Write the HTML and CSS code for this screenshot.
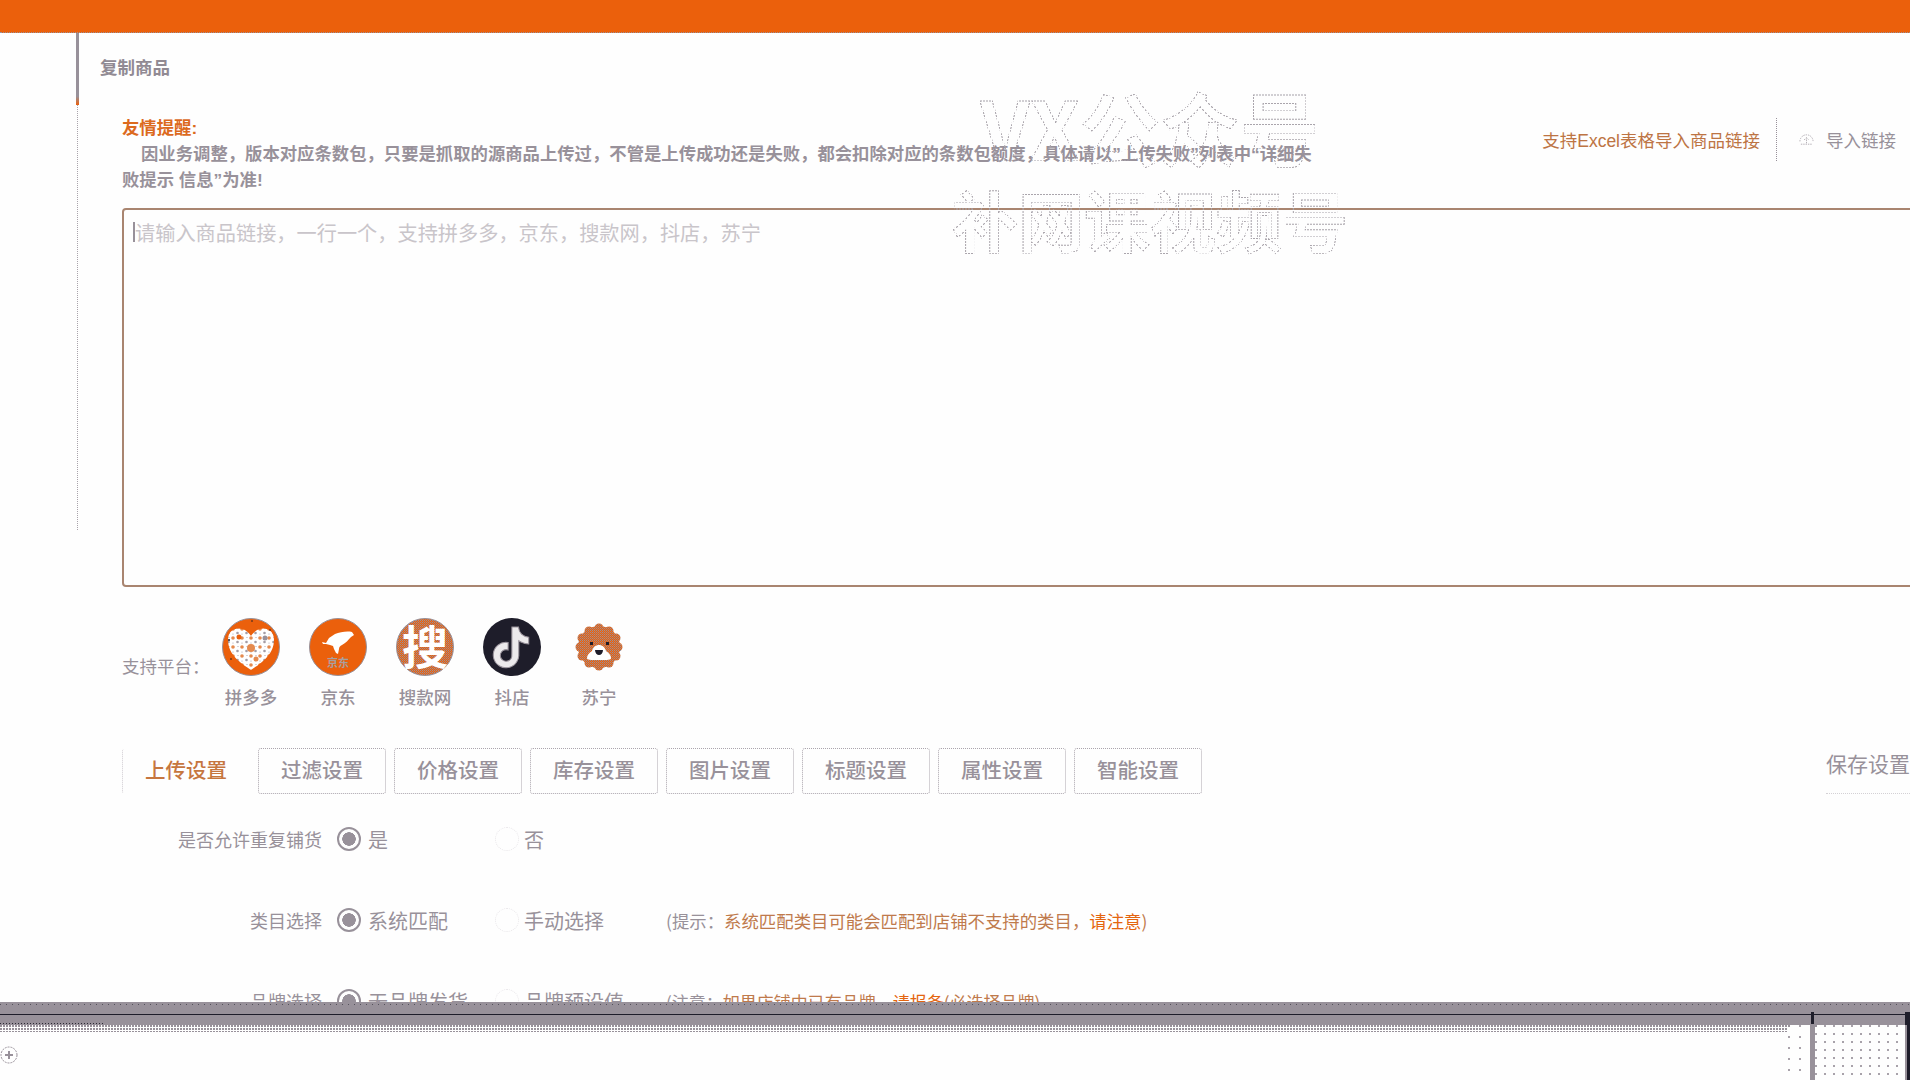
FILE: index.html
```html
<!DOCTYPE html>
<html lang="zh-CN">
<head>
<meta charset="utf-8">
<title>复制商品</title>
<link rel="stylesheet" href="styles.css">
</head>
<body>
<svg class="defs" width="0" height="0">
  <defs>
    <pattern id="speck" width="9" height="9" patternUnits="userSpaceOnUse">
      <rect width="9" height="9" fill="#fff"/>
      <circle cx="2" cy="2" r="1.800" fill="#e58a4e"/>
      <circle cx="6.500" cy="6" r="1.300" fill="#a39ca5"/>
      <circle cx="7" cy="1.500" r=".5" fill="#98919a"/>
      <circle cx="2" cy="7" r=".5" fill="#98919a"/>
    </pattern>
    <pattern id="dither" width="2" height="2" patternUnits="userSpaceOnUse">
      <rect width="2" height="2" fill="#eb600c"/>
      <rect width="1" height="1" fill="#98919a"/>
      <rect x="1" y="1" width="1" height="1" fill="#98919a" opacity=".6"/>
    </pattern>
  </defs>
</svg>
<header class="topbar"></header>
<div class="shell">
  <div class="rail"><div class="rail-thick"></div><div class="rail-dots"></div></div>
  <main class="content">
    <h1 class="page-title">复制商品</h1>
    <section class="notice-row">
      <div class="notice">
        <div class="notice-head">友情提醒:</div>
        <p class="notice-body">因业务调整，版本对应条数包，只要是抓取的源商品上传过，不管是上传成功还是失败，都会扣除对应的条数包额度，具体请以”上传失败”列表中“详细失败提示 信息”为准!</p>
      </div>
      <div class="tools">
        <span class="tool-link">支持Excel表格导入商品链接</span>
        <span class="tool-divider"></span>
        <svg class="tool-icon" viewBox="0 0 16 16"><path d="M1 10a7 7 0 1 1 14 0"/><path d="M2 13h12"/><path d="M8 12V6M5.500 8.500 8 6l2.500 2.500"/></svg>
        <span class="tool-btn">导入链接</span>
      </div>
    </section>
    <div class="input-wrap">
      <textarea class="links" placeholder="请输入商品链接，一行一个，支持拼多多，京东，搜款网，抖店，苏宁"></textarea>
      <span class="caret"></span>
    </div>
    <section class="platforms">
      <div class="platforms-label">支持平台：</div>
      <div class="platform">
        <svg class="logo" viewBox="0 0 58 58">
          <circle cx="29" cy="29" r="28.500" fill="#eb600c" stroke="#98919a"/>
          <path d="M29 52C20 46 6 37 6 22 6 12 14 9 20 11c4 1 7 4 9 7 2-3 5-6 9-7 6-2 14 1 14 11 0 15-14 24-23 30z" fill="url(#speck)"/>
          <circle cx="29" cy="30" r="4" fill="#e58a4e"/><circle cx="17" cy="19" r="2.500" fill="#eb600c"/><circle cx="43" cy="20" r="2.500" fill="#98919a"/><circle cx="34" cy="41" r="2.500" fill="#e58a4e"/>
          <circle cx="7" cy="22" r="1" fill="#1e1d2a"/><circle cx="9" cy="41" r=".8" fill="#1e1d2a"/><circle cx="30" cy="3" r=".8" fill="#1e1d2a"/><circle cx="48" cy="12" r=".8" fill="#1e1d2a"/>
        </svg>
        <span class="platform-name">拼多多</span>
      </div>
      <div class="platform">
        <svg class="logo" viewBox="0 0 58 58">
          <circle cx="29" cy="29" r="28.500" fill="#eb600c" stroke="#98919a"/>
          <path d="M13 24l4 1 3-5 6-4c5-2 12-3 17-2l2 3-3 2c-3 3-5 6-9 8-2 1-3 2-3 4l-1 5-2-1-2-4-1-3-3-1-4-1-3 0z" fill="#fff"/>
          <text class="logo-small" x="29" y="49">京东</text>
        </svg>
        <span class="platform-name">京东</span>
      </div>
      <div class="platform">
        <svg class="logo" viewBox="0 0 58 58">
          <circle cx="29" cy="29" r="28.500" fill="url(#dither)" stroke="#98919a"/>
          <text class="logo-big" x="29" y="46">搜</text>
        </svg>
        <span class="platform-name">搜款网</span>
      </div>
      <div class="platform">
        <svg class="logo" viewBox="0 0 58 58">
          <circle cx="29" cy="29" r="29" fill="#1e1d2a"/>
          <path class="note" transform="translate(7.600 9) scale(1.700)" d="M12.530.02C13.840 0 15.140.01 16.440 0c.08 1.530.63 3.090 1.750 4.170 1.120 1.110 2.700 1.620 4.240 1.790v4.030c-1.440-.05-2.890-.35-4.200-.97-.57-.26-1.100-.59-1.620-.93-.01 2.920.01 5.840-.02 8.750-.08 1.400-.54 2.790-1.350 3.940-1.310 1.920-3.580 3.170-5.910 3.210-1.430.08-2.860-.31-4.080-1.030-2.020-1.190-3.440-3.370-3.650-5.710-.02-.5-.03-1-.01-1.490.18-1.900 1.120-3.720 2.580-4.960 1.660-1.440 3.980-2.130 6.150-1.720.02 1.480-.04 2.960-.04 4.440-.99-.32-2.150-.23-3.020.37-.63.41-1.110 1.040-1.360 1.750-.21.51-.15 1.070-.14 1.610.24 1.640 1.820 3.020 3.500 2.870 1.120-.01 2.190-.66 2.770-1.610.19-.33.4-.67.41-1.060.1-1.790.06-3.570.07-5.360.01-4.030-.01-8.050.02-12.070z"/>
        </svg>
        <span class="platform-name">抖店</span>
      </div>
      <div class="platform">
        <svg class="logo" viewBox="0 0 58 58">
          <g fill="url(#dither)">
            <circle cx="29" cy="29" r="21"/>
            <circle cx="29" cy="10" r="4.500"/><circle cx="39" cy="13" r="4.500"/><circle cx="46" cy="20" r="4.500"/><circle cx="48" cy="29" r="4.500"/><circle cx="46" cy="38" r="4.500"/><circle cx="39" cy="45" r="4.500"/><circle cx="29" cy="48" r="4.500"/><circle cx="19" cy="45" r="4.500"/><circle cx="12" cy="38" r="4.500"/><circle cx="10" cy="29" r="4.500"/><circle cx="12" cy="20" r="4.500"/><circle cx="19" cy="13" r="4.500"/>
          </g>
          <path d="M17 40c0-3 2-5 5-7 1-4 4-6 7-6s6 2 7 6c3 2 5 4 5 7 0 2-3 2-12 2s-12 0-12-2z" fill="#fff"/>
          <path d="M25 32h8c0 3-2 5-4 5s-4-2-4-5z" fill="#1e1d2a"/>
          <rect x="20" y="24" width="3" height="3" fill="#1e1d2a"/><rect x="36" y="24" width="3" height="3" fill="#1e1d2a"/>
        </svg>
        <span class="platform-name">苏宁</span>
      </div>
    </section>
    <nav class="tabs">
      <span class="tab tab-active">上传设置</span>
      <span class="tab">过滤设置</span>
      <span class="tab">价格设置</span>
      <span class="tab">库存设置</span>
      <span class="tab">图片设置</span>
      <span class="tab">标题设置</span>
      <span class="tab">属性设置</span>
      <span class="tab">智能设置</span>
      <span class="save">保存设置</span>
    </nav>
    <section class="form">
      <div class="row">
        <span class="row-label">是否允许重复铺货</span>
        <span class="opt opt-first"><i class="radio radio-on"></i>是</span>
        <span class="opt opt-second"><i class="radio"></i>否</span>
      </div>
      <div class="row">
        <span class="row-label">类目选择</span>
        <span class="opt opt-first"><i class="radio radio-on"></i>系统匹配</span>
        <span class="opt opt-second"><i class="radio"></i>手动选择</span>
        <span class="hint"><span class="hint-lead">(提示：</span>系统匹配类目可能会匹配到店铺不支持的类目，<b class="hint-strong">请注意</b>)</span>
      </div>
      <div class="row">
        <span class="row-label">品牌选择</span>
        <span class="opt opt-first"><i class="radio radio-on"></i>无品牌发货</span>
        <span class="opt opt-second"><i class="radio"></i>品牌预设值</span>
        <span class="hint hint-short"><span class="hint-lead">(注意：</span>如果店铺中已有品牌，<b class="hint-strong">请报备</b>(必选择品牌)</span>
      </div>
    </section>
  </main>
</div>
<footer class="dock">
  <div class="band"><span class="band-mark"></span><span class="band-corner"></span></div>
  <div class="dock-body">
    <div class="console">
      <div class="console-dither"></div>
      <svg class="console-icon" viewBox="0 0 18 18"><circle cx="9" cy="9" r="8" stroke-dasharray="2 1"/><path d="M9 5v8M5 9h8" class="console-plus"/></svg>
    </div>
    <div class="side side-narrow"></div>
    <div class="side-bar"></div>
    <div class="side side-wide"></div>
    <div class="side-dark"></div>
  </div>
</footer>
<div class="watermark">
  <div class="wm-one">VX公众号</div>
  <div class="wm-two">补网课视频号</div>
</div>
</body>
</html>
```
FILE: styles.css
```css
* { box-sizing: border-box; }
html, body { margin: 0; padding: 0; }
body {
  position: relative;
  width: 1910px;
  height: 1080px;
  overflow: hidden;
  display: flex;
  flex-direction: column;
  background: #fefefe;
  color: #98919a;
  font-family: "Noto Sans CJK SC", "Liberation Sans", sans-serif;
}
.defs { position: absolute; }
.topbar { height: 33px; flex: none; background: #eb600c; border-bottom: 1px dotted #98919a; }
.shell { flex: none; height: 969px; display: flex; overflow: hidden; }
.rail { flex: none; width: 3px; margin-left: 76px; }
.rail-thick { height: 72px; width: 3px; background: linear-gradient(#98919a 88%, #eb600c); }
.rail-dots { height: 425px; width: 1px; border-left: 1px dotted #a9a3ab; margin-left: 1px; }
.content { flex: none; width: 1817px; padding-left: 43px; }
.page-title { margin: 0 0 0 -22px; padding-top: 22px; height: 82px; font-size: 17.500px; line-height: 24px; font-weight: 700; color: #918a93; }
.notice-row { display: flex; justify-content: space-between; align-items: flex-start; height: 93px; }
.notice { width: 1200px; font-family: "Liberation Sans", "Noto Sans CJK SC", sans-serif; font-size: 17.350px; line-height: 26px; font-weight: 700; }
.notice-head { color: #dc6a1e; }
.notice-body { margin: 0; text-indent: 19px; }
.tools { display: flex; align-items: center; margin-top: 3px; height: 43px; font-family: "Liberation Sans", "Noto Sans CJK SC", sans-serif; }
.tool-link { color: #bd7444; font-size: 17.500px; }
.tool-divider { height: 43px; width: 1px; margin: 0 22px 0 16px; border-left: 1px dotted #98919a; }
.tool-icon { width: 15px; height: 15px; margin-right: 12px; fill: none; stroke: #b0abb2; stroke-width: 1; stroke-dasharray: 1.500 1; }
.tool-btn { font-size: 17.500px; color: #98919a; }
.input-wrap { position: relative; width: 1850px; height: 379px; }
.links {
  display: block;
  width: 100%;
  height: 100%;
  resize: none;
  padding: 9px 11px;
  border: 2px solid #a98570;
  border-radius: 4px;
  background: #fefefe;
  font-family: inherit;
  font-size: 20.200px;
  line-height: 28px;
  outline: none;
}
.links::placeholder { color: #c9c5ca; opacity: 1; }
.caret { position: absolute; left: 11px; top: 14px; width: 2px; height: 20px; background: #98919a; }
.platforms { display: flex; margin-top: 31px; height: 130px; }
.platforms-label { width: 85.500px; padding-top: 36px; font-size: 17.500px; line-height: 24px; white-space: nowrap; }
.platform { width: 87px; display: flex; flex-direction: column; align-items: center; }
.logo { width: 58px; height: 58px; display: block; }
.logo-small { font-size: 11px; font-weight: 700; fill: #a89f9f; text-anchor: middle; }
.logo-big { font-size: 46px; font-weight: 700; fill: #fff; text-anchor: middle; }
.note { fill: #eceaec; stroke: #98919a; stroke-width: .6; }
.platform-name { margin-top: 8px; font-size: 17.500px; line-height: 26px; font-weight: 500; white-space: nowrap; }
.tabs { display: flex; gap: 8px; height: 46px; align-items: stretch; }
.tab {
  flex: none;
  width: 128px;
  display: flex;
  align-items: center;
  justify-content: center;
  padding-bottom: 4px;
  font-size: 20.500px;
  font-weight: 500;
  border: 1px dotted #aba5ad;
  border-radius: 3px;
}
.tab-active { border-color: transparent; color: #c6763f; border-left-color: #d0ccd1; }
.save { margin-left: auto; margin-right: -14px; font-size: 21px; line-height: 30px; height: 46px; border-bottom: 1px dotted #d4d1d5; width: 84px; white-space: nowrap; }
.form { display: flex; flex-direction: column; gap: 51px; padding-top: 30px; }
.row { display: flex; align-items: center; height: 30px; font-size: 20px; white-space: nowrap; }
.row-label { width: 200px; margin-right: 15px; text-align: right; font-size: 18px; }
.opt { display: flex; align-items: center; }
.opt-first { width: 158px; }
.opt-second { width: 171px; }
.opt-second .radio { margin-right: 5px; }
.radio { width: 24px; height: 24px; margin-right: 7px; border-radius: 50%; border: 1px dotted #e9e7ea; }
.radio-on { border: 2px solid #98919a; background: radial-gradient(circle, #98919a 0 6.500px, #fefefe 7px); }
.hint { font-size: 17.400px; color: #bf7a4c; }
.hint-short { font-size: 17px; }
.hint-lead { color: #98919a; }
.hint-strong { font-weight: 400; color: #e4650f; }
.dock { flex: none; height: 78px; position: relative; display: flex; flex-direction: column; }
.band {
  position: relative;
  height: 23px;
  flex: none;
  background:
    repeating-linear-gradient(90deg, #55525c 0 1px, transparent 1px 6px) 0 2px / 100% 1px no-repeat,
    linear-gradient(#1e1d2a, #1e1d2a) 0 12px / 100% 1px no-repeat,
    repeating-linear-gradient(90deg, #2a2933 0 1px, transparent 1px 3px) 0 21px / 105px 1px no-repeat,
    #98919a;
}
.band-mark { position: absolute; left: 1811px; top: 10px; width: 3px; height: 12px; background: #1e1d2a; }
.band-corner { position: absolute; right: 0; top: 10px; width: 5px; height: 13px; background: #1e1d2a; }
.dock-body { flex: 1; display: flex; }
.console { flex: none; width: 1788px; position: relative; }
.console-dither {
  height: 7px;
  background: radial-gradient(circle at 1px 1px, #98919a 1px, transparent 1px) 0 0 / 3px 3px;
}
.console-icon { display: block; width: 18px; height: 18px; margin-top: 14px; fill: none; stroke: #98919a; stroke-width: 1; }
.console-plus { stroke-width: 2; }
.side {
  flex: none;
  background:
    radial-gradient(circle at 1px 1px, #98919a 1px, transparent 1px) 0 0 / 3px 3px no-repeat,
    radial-gradient(circle at 1px 1px, #a8a2aa 1px, transparent 1px) 0 0 / 9px 8px;
}
.side-narrow { width: 22px; background-size: 3px 3px, 11px 11px; }
.side-bar { flex: none; width: 5px; background: #98919a; }
.side-wide { width: 90px; }
.side-dark { flex: none; width: 5px; background: linear-gradient(90deg, #98919a 0 2px, #1e1d2a 2px); }
.watermark {
  position: absolute;
  left: 950px;
  top: 76px;
  width: 400px;
  text-align: center;
  color: transparent;
  -webkit-text-stroke: 1px #aaa5ac;
  white-space: nowrap;
  font-weight: 700;
  -webkit-mask-image: radial-gradient(circle at 1px 1px, #000 1px, transparent 1px);
  mask-image: radial-gradient(circle at 1px 1px, #000 1px, transparent 1px);
  -webkit-mask-size: 3px 3px;
  mask-size: 3px 3px;
}
.wm-one { font-size: 80px; line-height: 98px; }
.wm-two { font-size: 66px; line-height: 88px; }
```
